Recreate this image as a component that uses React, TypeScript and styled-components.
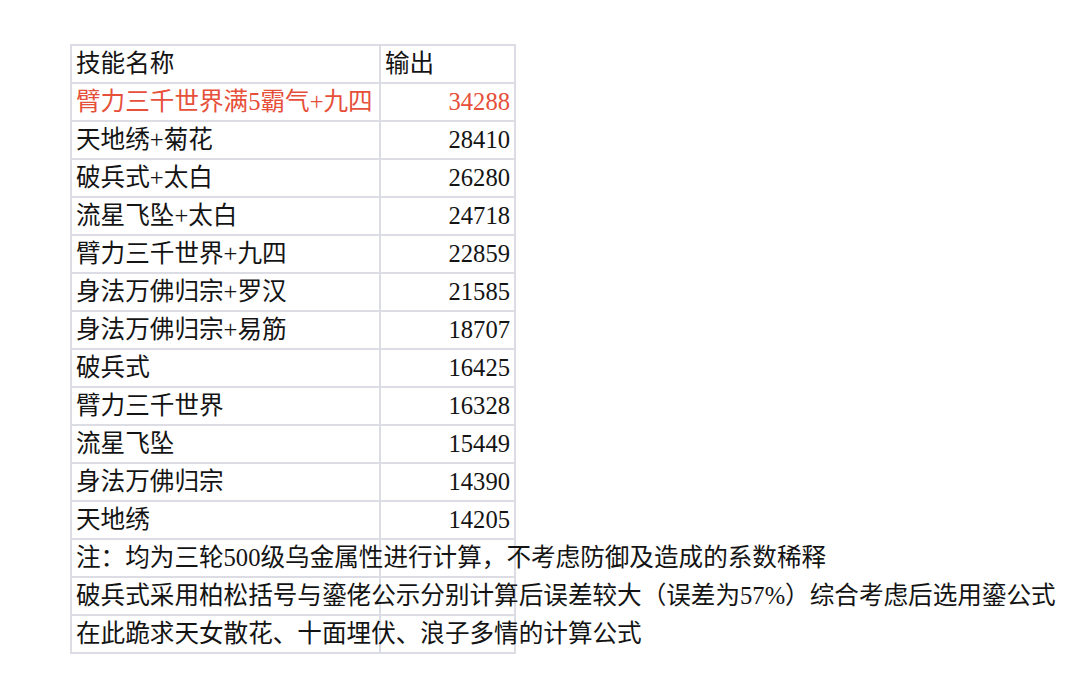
import React from "react";
import styled, { createGlobalStyle } from "styled-components";

const GlobalStyle = createGlobalStyle`
    html, body {
        margin: 0;
        padding: 0;
        background: #ffffff;
    }
`;

type Row = { name: string; value: number; highlight?: boolean };

const rows: Row[] = [
    { name: "臂力三千世界满5霸气+九四", value: 34288, highlight: true },
    { name: "天地绣+菊花", value: 28410 },
    { name: "破兵式+太白", value: 26280 },
    { name: "流星飞坠+太白", value: 24718 },
    { name: "臂力三千世界+九四", value: 22859 },
    { name: "身法万佛归宗+罗汉", value: 21585 },
    { name: "身法万佛归宗+易筋", value: 18707 },
    { name: "破兵式", value: 16425 },
    { name: "臂力三千世界", value: 16328 },
    { name: "流星飞坠", value: 15449 },
    { name: "身法万佛归宗", value: 14390 },
    { name: "天地绣", value: 14205 },
];

const notes = [
    "注：均为三轮500级乌金属性进行计算，不考虑防御及造成的系数稀释",
    "破兵式采用柏松括号与鎏佬公示分别计算后误差较大（误差为57%）综合考虑后选用鎏公式",
    "在此跪求天女散花、十面埋伏、浪子多情的计算公式",
];

const App: React.FC = () => {
    return (
        <>
            <GlobalStyle />
            <Page>
                <Table>
                    <colgroup>
                        <col style={{ width: 309 }} />
                        <col style={{ width: 135 }} />
                    </colgroup>
                    <tbody>
                        <tr>
                            <NameCell>技能名称</NameCell>
                            <NameCell>输出</NameCell>
                        </tr>
                        {rows.map(row => (
                            <tr key={row.name}>
                                <NameCell $highlight={row.highlight}>{row.name}</NameCell>
                                <ValueCell $highlight={row.highlight}>{row.value}</ValueCell>
                            </tr>
                        ))}
                        {notes.map(note => (
                            <tr key={note}>
                                <NoteCell>{note}</NoteCell>
                                <ValueCell />
                            </tr>
                        ))}
                    </tbody>
                </Table>
            </Page>
        </>
    );
};

export default App;

const Page = styled.div`
    padding: 44px 0 0 70px;
    font-family: "Liberation Serif", "Noto Sans CJK SC", serif;
    color: #111111;
`;

const Table = styled.table`
    border-collapse: collapse;
    table-layout: fixed;
    width: 446px;

    tr {
        height: 38px;
    }
`;

const Cell = styled.td<{ $highlight?: boolean }>`
    border: 2px solid #dcdce4;
    padding: 0 4px;
    font-size: 24.6px;
    line-height: 30px;
    vertical-align: middle;
    white-space: nowrap;
    color: ${props => (props.$highlight ? "#e6503a" : "#141414")};
`;

const NameCell = styled(Cell)`
    text-align: left;
`;

const ValueCell = styled(Cell)`
    text-align: right;
`;

const NoteCell = styled(Cell)`
    overflow: visible;
`;
